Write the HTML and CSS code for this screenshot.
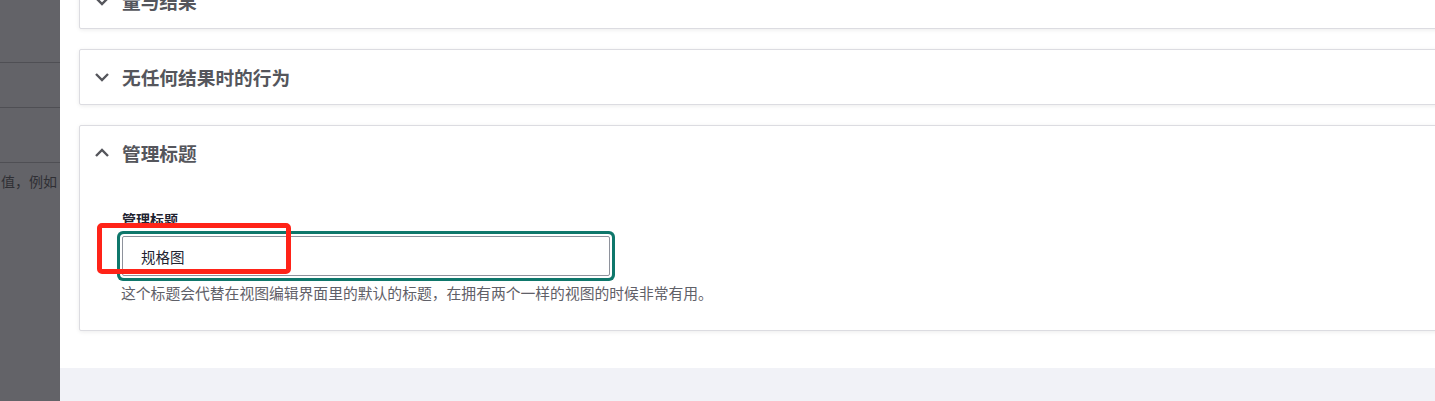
FILE: index.html
```html
<!DOCTYPE html>
<html lang="zh-CN">
<head>
<meta charset="utf-8">
<title>管理标题</title>
<link rel="stylesheet" href="styles.css">
</head>
<body>
<div class="page">
  <aside class="scrim">
    <div class="scrim-row r1"></div>
    <div class="scrim-row r2"></div>
    <div class="scrim-row r3"></div>
    <div class="scrim-text">值，例如</div>
  </aside>
  <main class="panel">
    <div class="content">
      <section class="card first">
        <div class="card-head">
          <svg class="chev" viewBox="0 0 16 10" width="16" height="10"><path d="M2 2 L8 8 L14 2" fill="none" stroke="currentColor" stroke-width="2.4"/></svg>
          <span class="card-title">量与结果</span>
        </div>
      </section>
      <section class="card">
        <div class="card-head">
          <svg class="chev" viewBox="0 0 16 10" width="16" height="10"><path d="M2 2 L8 8 L14 2" fill="none" stroke="currentColor" stroke-width="2.4"/></svg>
          <span class="card-title">无任何结果时的行为</span>
        </div>
      </section>
      <section class="card">
        <div class="card-head">
          <svg class="chev" viewBox="0 0 16 10" width="16" height="10"><path d="M2 8 L8 2 L14 8" fill="none" stroke="currentColor" stroke-width="2.4"/></svg>
          <span class="card-title">管理标题</span>
        </div>
        <div class="card-body">
          <label class="field-label" for="admin-title">管理标题</label>
          <input id="admin-title" class="field-input" type="text" value="规格图">
          <div class="field-desc">这个标题会代替在视图编辑界面里的默认的标题，在拥有两个一样的视图的时候非常有用。</div>
        </div>
      </section>
    </div>
    <div class="footer"></div>
  </main>
  <div class="annotation"></div>
</div>
</body>
</html>
```

FILE: styles.css
```css
html, body {
  margin: 0;
  padding: 0;
}
body {
  font-family: "Noto Sans CJK SC", "Noto Sans", sans-serif;
  background: #ffffff;
  overflow: hidden;
}
.page {
  position: relative;
  display: flex;
  width: 1435px;
  height: 401px;
  overflow: hidden;
}
.scrim {
  width: 60px;
  flex: none;
  background: #636368;
  overflow: hidden;
}
.scrim-row {
  border-bottom: 1px solid #4f4f54;
}
.scrim-row.r1 { height: 62px; }
.scrim-row.r2 { height: 44px; }
.scrim-row.r3 { height: 54px; }
.scrim-text {
  padding-top: 8px;
  padding-left: 1px;
  font-size: 14px;
  line-height: 20px;
  color: #2f2f34;
  white-space: nowrap;
}
.panel {
  flex: 1;
  display: flex;
  flex-direction: column;
  overflow: hidden;
  min-width: 0;
}
.content {
  background: #ffffff;
  padding: 0 0 37px 19px;
}
.footer {
  flex: 1;
  background: #f1f2f7;
}
.card {
  margin-right: -40px;
  margin-bottom: 20px;
  border: 1px solid #dcdce1;
  border-radius: 2px;
  background: #ffffff;
  box-shadow: 0 1px 4px rgba(0, 0, 0, 0.08);
}
.card:last-child {
  margin-bottom: 0;
}
.card.first {
  margin-top: -27px;
}
.card-head {
  height: 54px;
  display: flex;
  align-items: center;
  padding-left: 14px;
  gap: 12px;
  color: #55565c;
}
.chev {
  flex: none;
  display: block;
}
.card-title {
  font-size: 18.7px;
  font-weight: 700;
  line-height: 24px;
  color: #55565c;
}
.card-body {
  padding: 30px 0 29px 42px;
}
.field-label {
  display: block;
  font-size: 14px;
  font-weight: 700;
  line-height: 18px;
  color: #222330;
}
.field-input {
  display: block;
  box-sizing: border-box;
  width: 488px;
  height: 40px;
  margin: 8px 0 0 0;
  padding: 0 18px;
  border: 1px solid #8e929c;
  border-radius: 2px;
  font-family: "Noto Sans CJK SC", "Noto Sans", sans-serif;
  font-size: 14.5px;
  color: #222330;
  background: #ffffff;
  outline: none;
  box-shadow: 0 0 0 2px #ffffff, 0 0 0 5px #0f776b;
}
.field-desc {
  margin-top: 9px;
  margin-left: -1px;
  font-size: 14.8px;
  line-height: 16px;
  color: #5f6068;
  white-space: nowrap;
}
.annotation {
  position: absolute;
  left: 97px;
  top: 223px;
  width: 194px;
  height: 51px;
  box-sizing: border-box;
  border: 5px solid #ff2318;
  border-radius: 5px;
  pointer-events: none;
}
```
